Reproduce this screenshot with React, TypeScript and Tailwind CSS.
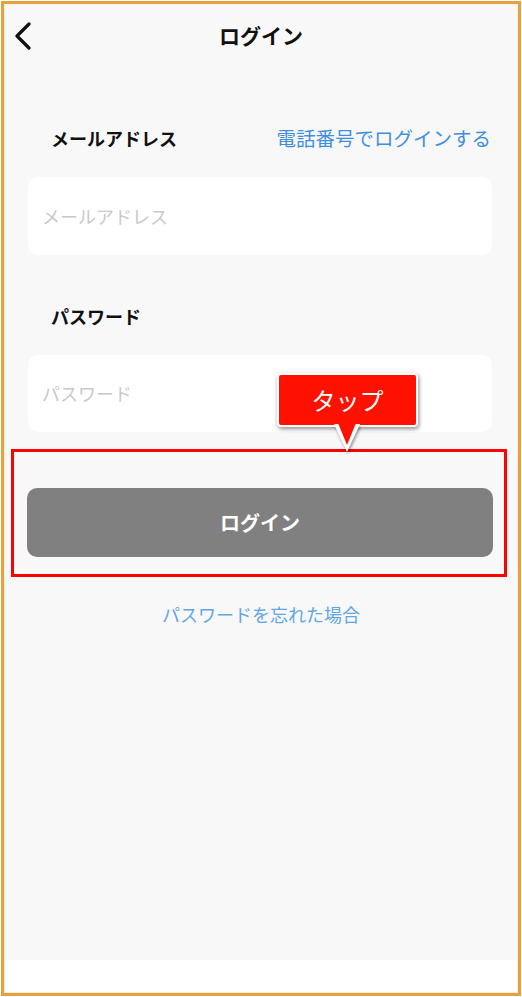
import React from "react";

const font = { fontFamily: '"Noto Sans CJK JP", "Noto Sans", sans-serif' };

export default function App() {
  return (
    <div className="w-[522px] h-[997px] bg-white p-px" style={font}>
      <div className="w-[520px] h-[995px] border-[3px] border-[#e3a23f]">
        <div className="relative flex h-full flex-col border border-[#fbeedb] bg-white">
          <div className="flex flex-col bg-[#f8f8f8] h-[955px]">
            {/* header */}
            <div className="relative flex h-[60px] items-center justify-center">
              <svg
                className="absolute left-[8px] top-[17px]"
                width="20"
                height="28"
                viewBox="0 0 20 28"
                fill="none"
              >
                <path
                  d="M16 2 L4 14 L16 26"
                  stroke="#111"
                  strokeWidth="3.2"
                  strokeLinecap="round"
                  strokeLinejoin="round"
                />
              </svg>
              <span className="text-[21px] font-semibold text-[#111] leading-none">ログイン</span>
            </div>

            {/* email label row */}
            <div className="mt-[58px] flex h-[30px] items-center justify-between pl-[46px] pr-[26px]">
              <span className="text-[18px] font-bold text-[#111]">メールアドレス</span>
              <span className="text-[19.5px] text-[#3f8fe0]">電話番号でログインする</span>
            </div>
            <div className="ml-[23px] mr-[25px] mt-[24px] flex h-[78px] items-center rounded-[10px] bg-white px-[14px]">
              <span className="text-[18px] text-[#c9c9c9]">メールアドレス</span>
            </div>

            {/* password */}
            <div className="mt-[46px] flex h-[30px] items-center pl-[46px]">
              <span className="text-[18px] font-bold text-[#111]">パスワード</span>
            </div>
            <div className="ml-[23px] mr-[25px] mt-[24px] flex h-[77px] items-center rounded-[10px] bg-white px-[14px]">
              <span className="text-[18px] text-[#c9c9c9]">パスワード</span>
            </div>

            {/* highlighted button */}
            <div className="ml-[6px] mr-[10px] mt-[17px] border-[3px] border-[#ff0000] pl-[13px] pr-[11px] pt-[36px] pb-[17px]">
              <div className="flex h-[69px] items-center justify-center rounded-[10px] bg-[#808080]">
                <span className="text-[20px] font-bold text-white">ログイン</span>
              </div>
            </div>

            <div className="mt-[25px] flex h-[24px] items-center justify-center">
              <span className="text-[18px] text-[#62a6e6]">パスワードを忘れた場合</span>
            </div>
          </div>

          {/* tooltip */}
          <div className="absolute left-[272px] top-[368px]">
            <div className="relative">
              <div className="flex h-[54px] w-[141px] items-center justify-center rounded-[4px] border-[2px] border-white bg-[#ff1100] shadow-[1px_2px_4px_rgba(0,0,0,0.45)]">
                <span className="text-[24px] text-white leading-none">タップ</span>
              </div>
              <svg
                className="absolute left-[55px] top-[50px]"
                width="30"
                height="32"
                viewBox="0 0 30 32"
              >
                <path d="M2 1 L15 29 L28 1 Z" fill="#ffffff" style={{ filter: "drop-shadow(1px 2px 1.5px rgba(0,0,0,0.4))" }} />
                <path d="M6 0 L15 22 L24 0 Z" fill="#ff1100" />
              </svg>
            </div>
          </div>
        </div>
      </div>
    </div>
  );
}
